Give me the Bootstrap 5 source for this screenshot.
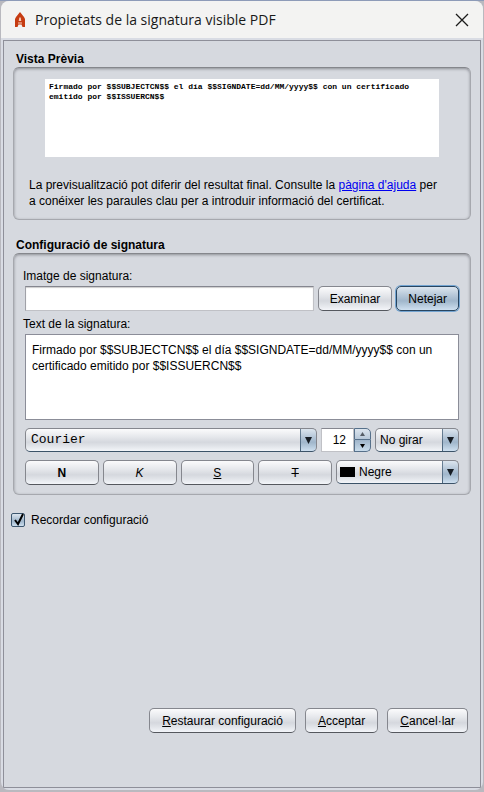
<!DOCTYPE html>
<html lang="ca">
<head>
<meta charset="utf-8">
<meta name="viewport" content="width=device-width, initial-scale=1">
<title>Propietats de la signatura visible PDF</title>
<link rel="stylesheet" href="https://cdn.jsdelivr.net/npm/bootstrap@5.3.0/dist/css/bootstrap.min.css">
<style>
  :root { --panel: #d6d9df; --edge: #8e8f99; --metal: linear-gradient(#fbfbfc, #e6e8ec 35%, #d5d8de 60%, #dfe2e7 75%, #f3f5f9); --steel: linear-gradient(#dce5ee, #b7c8d9 35%, #a0b6cb 60%, #b0c5d8 75%, #cfe0f0); }
  body { background: linear-gradient(#8d9bb8 0 1px, #b9b9bf 1px); font: 12px/16px "Liberation Sans", Arial, sans-serif; color: #000; padding: 1px 1px 2px 1px; }
  .window { min-height: calc(100vh - 3px); background: #d9dce4; border-radius: 8px; overflow: hidden; }
  .titlebar { height: 37px; background: #f3f3f2; padding: 0 14px 0 12px; }
  .titlebar h1 { font: 14px/20px "Open Sans", "Noto Sans", sans-serif; color: #191919; margin-left: 8px; }
  .close-btn { width: 14px; height: 14px; }
  .pane { margin: 2px; border: 1px solid var(--edge); background: var(--panel); padding: 10px 9px 54px; }
  .group-title { font: bold 12px/16px "Liberation Sans", Arial, sans-serif; padding-left: 3px; }
  .second-title { margin-top: 17px; }
  .group-box { border: 1px solid #a6a8ae; border-top-color: #85878c; border-radius: 6px; box-shadow: inset 0 1px 3px #8c8e94; }
  .preview-group { padding: 11px 15px 10px; }
  .preview-sheet { height: 78px; margin: 0 16px 20px; padding: 3px 4px; font: bold 8px/10px "Liberation Mono", "Courier New", monospace; white-space: pre-line; }
  .preview-note { padding-right: 15px; }
  .help-link { color: #0000f0; }
  .config-group { margin-bottom: 17px; padding: 14px 9px 9px; }
  .fields { padding: 2px 2px 0; }
  .image-row { margin-bottom: 5px; }
  .gap-4px { gap: 4px; }
  .push { padding: 0; font-size: 12px; line-height: 16px; height: 25px; color: #000; border: 1px solid #85878e; border-bottom-color: #55585e; border-radius: 5px; background: var(--metal); }
  .push:hover { color: #000; border-color: #55585e; }
  .push.chosen { background: var(--steel); border-color: #284560; box-shadow: 0 0 0 1px #73a4d1; }
  .image-row .push, .footer-row .push { padding: 0 12px; }
  .image-row .push { padding: 0 11px; }
  .entry { border: 1px solid #c0c1c6; border-top-color: #85868f; border-left-color: #a0a1a8; background: #fff; border-radius: 0; padding: 0 6px; height: 25px; font-size: 12px; min-width: 0; box-shadow: inset 0 1px 1px #ccc; }
  .memo { border: 1px solid #8b8d98; border-radius: 0; background: #fff; color: #000; font-size: 12px; line-height: 16px; padding: 7px 6px; height: 86px; resize: none; }
  .combo { appearance: none; height: 24px; border: 1px solid #85878e; border-bottom-color: #3c5368; border-radius: 5px; padding: 0 18px 0 4px; font-size: 12px; color: #000; min-width: 0;
    background: url("data:image/svg+xml,%3Csvg xmlns='http://www.w3.org/2000/svg' viewBox='0 0 7 7'%3E%3Cpath d='M0 0h7L3.500 7z' fill='%23171d24'/%3E%3C/svg%3E") right 4px center / 7px 7px no-repeat, linear-gradient(#6c8297, #4b647c) right 15px top / 1px 100% no-repeat, var(--steel) right / 15px 100% no-repeat, var(--metal); }
  .font-combo { font-family: "Liberation Mono", "Courier New", monospace; font-size: 13px; padding-left: 5px; }
  .side-wide { width: 123px; }
  .side-combo { width: 84px; }
  .swatch { position: absolute; left: 4px; top: 7px; width: 15px; height: 10px; background: #000; pointer-events: none; }
  .colour-combo { padding-left: 22px; }
  .spin { width: 50px; height: 24px; }
  .spin input { border: 1px solid #c0c1c6; border-top-color: #85868f; width: 33px; padding: 0 7px 0 0; text-align: right; font-size: 12px; appearance: textfield; }
  .spin input::-webkit-inner-spin-button { appearance: none; margin: 0; }
  .step { border: 1px solid #56708a; height: 12px; padding: 0; background: linear-gradient(#dce5ee, #b7c8d9); border-radius: 0 5px 0 0; }
  .step + .step { border-top: 0; background: linear-gradient(#9fb5ca, #c9dcec); border-radius: 0 0 5px 0; }
  .step svg { width: 5px; height: 4px; display: block; margin: auto; }
  .tick { appearance: none; width: 14px; height: 14px; margin: 1px 6px 1px 0; border: 1px solid #3c566e; border-radius: 2px; background: var(--steel); }
  .tick-mark { position: absolute; left: 2px; top: 0; width: 13px; height: 14px; pointer-events: none; }
  .remember { margin-left: -2px; }
  .footer-row { gap: 9px; padding-right: 3px; }
</style>
<script src="https://cdn.jsdelivr.net/npm/bootstrap@5.3.0/dist/js/bootstrap.bundle.min.js" defer></script>
</head>
<body>
<main class="window d-flex flex-column">
  <header class="titlebar d-flex align-items-center">
    <svg width="14" height="16" viewBox="0 0 14 16" aria-hidden="true"><path d="M7 0 11 5 12 7V15H9.500L8.500 12.500H5.500L4.500 15H2V7L3 5Z" fill="#c63c12"/><path d="M6.300 5.500h1.400L8.300 9H5.700zM5 10.500h4v1H5z" fill="#f6cdbb"/></svg>
    <h1 class="mb-0 flex-grow-1">Propietats de la signatura visible PDF</h1>
    <button type="button" class="close-btn btn p-0 border-0 d-flex" aria-label="Tanca"><svg width="14" height="14" viewBox="0 0 14 14"><path d="m1 1 12 12M13 1 1 13" stroke="#1a1a1a" stroke-width="1.300"/></svg></button>
  </header>
  <form class="pane flex-grow-1 d-flex flex-column">
    <h2 class="group-title mb-0">Vista Prèvia</h2>
    <section class="group-box preview-group">
      <div class="preview-sheet bg-white">Firmado por $$SUBJECTCN$$ el día $$SIGNDATE=dd/MM/yyyy$$ con un certificado
emitido por $$ISSUERCN$$</div>
      <p class="preview-note mb-0">La previsualització pot diferir del resultat final. Consulte la <a class="help-link" href="#">pàgina d'ajuda</a> per a conéixer les paraules clau per a introduir informació del certificat.</p>
    </section>

    <h2 class="group-title second-title mb-0">Configuració de signatura</h2>
    <section class="group-box config-group">
      <label class="d-block" for="image">Imatge de signatura:</label>
      <div class="fields image-row d-flex gap-4px">
        <input id="image" type="text" class="entry flex-grow-1">
        <button type="button" class="btn push">Examinar</button>
        <button type="button" class="btn push chosen">Netejar</button>
      </div>
      <label class="d-block" for="text">Text de la signatura:</label>
      <div class="fields">
        <textarea id="text" class="memo w-100 d-block mb-2" spellcheck="false">Firmado por $$SUBJECTCN$$ el día $$SIGNDATE=dd/MM/yyyy$$ con un certificado emitido por $$ISSUERCN$$</textarea>
        <div class="d-flex gap-4px mb-2">
          <select class="combo font-combo flex-grow-1" aria-label="Tipus de lletra"><option>Courier</option></select>
          <div class="spin d-flex">
            <input type="number" value="12" aria-label="Mida">
            <div class="flex-grow-1 d-flex flex-column">
              <button type="button" class="step" aria-label="Augmenta"><svg viewBox="0 0 5 4"><path d="M0 4h5L2.500 0z" fill="#555d66"/></svg></button>
              <button type="button" class="step" aria-label="Redueix"><svg viewBox="0 0 5 4"><path d="M0 0h5L2.500 4z" fill="#000"/></svg></button>
            </div>
          </div>
          <select class="combo side-combo" aria-label="Rotació"><option>No girar</option></select>
        </div>
        <div class="d-flex gap-4px">
          <button type="button" class="btn push w-25 fw-bold">N</button>
          <button type="button" class="btn push w-25 fst-italic">K</button>
          <button type="button" class="btn push w-25 text-decoration-underline">S</button>
          <button type="button" class="btn push w-25 text-decoration-line-through">T</button>
          <div class="position-relative side-wide flex-shrink-0">
            <select class="combo colour-combo w-100" aria-label="Color"><option>Negre</option></select>
            <span class="swatch"></span>
          </div>
        </div>
      </div>
    </section>

    <div class="remember position-relative d-flex align-items-center">
      <input type="checkbox" id="remember" class="tick" checked>
      <svg class="tick-mark" viewBox="0 0 13 14" aria-hidden="true"><path d="m2 8 3 4L10 2" fill="none" stroke="#000" stroke-width="2"/></svg>
      <label for="remember">Recordar configuració</label>
    </div>

    <div class="footer-row d-flex justify-content-end mt-auto">
      <button type="button" class="btn push"><u>R</u>estaurar configuració</button>
      <button type="submit" class="btn push"><u>A</u>cceptar</button>
      <button type="button" class="btn push"><u>C</u>ancel·lar</button>
    </div>
  </form>
</main>
</body>
</html>
